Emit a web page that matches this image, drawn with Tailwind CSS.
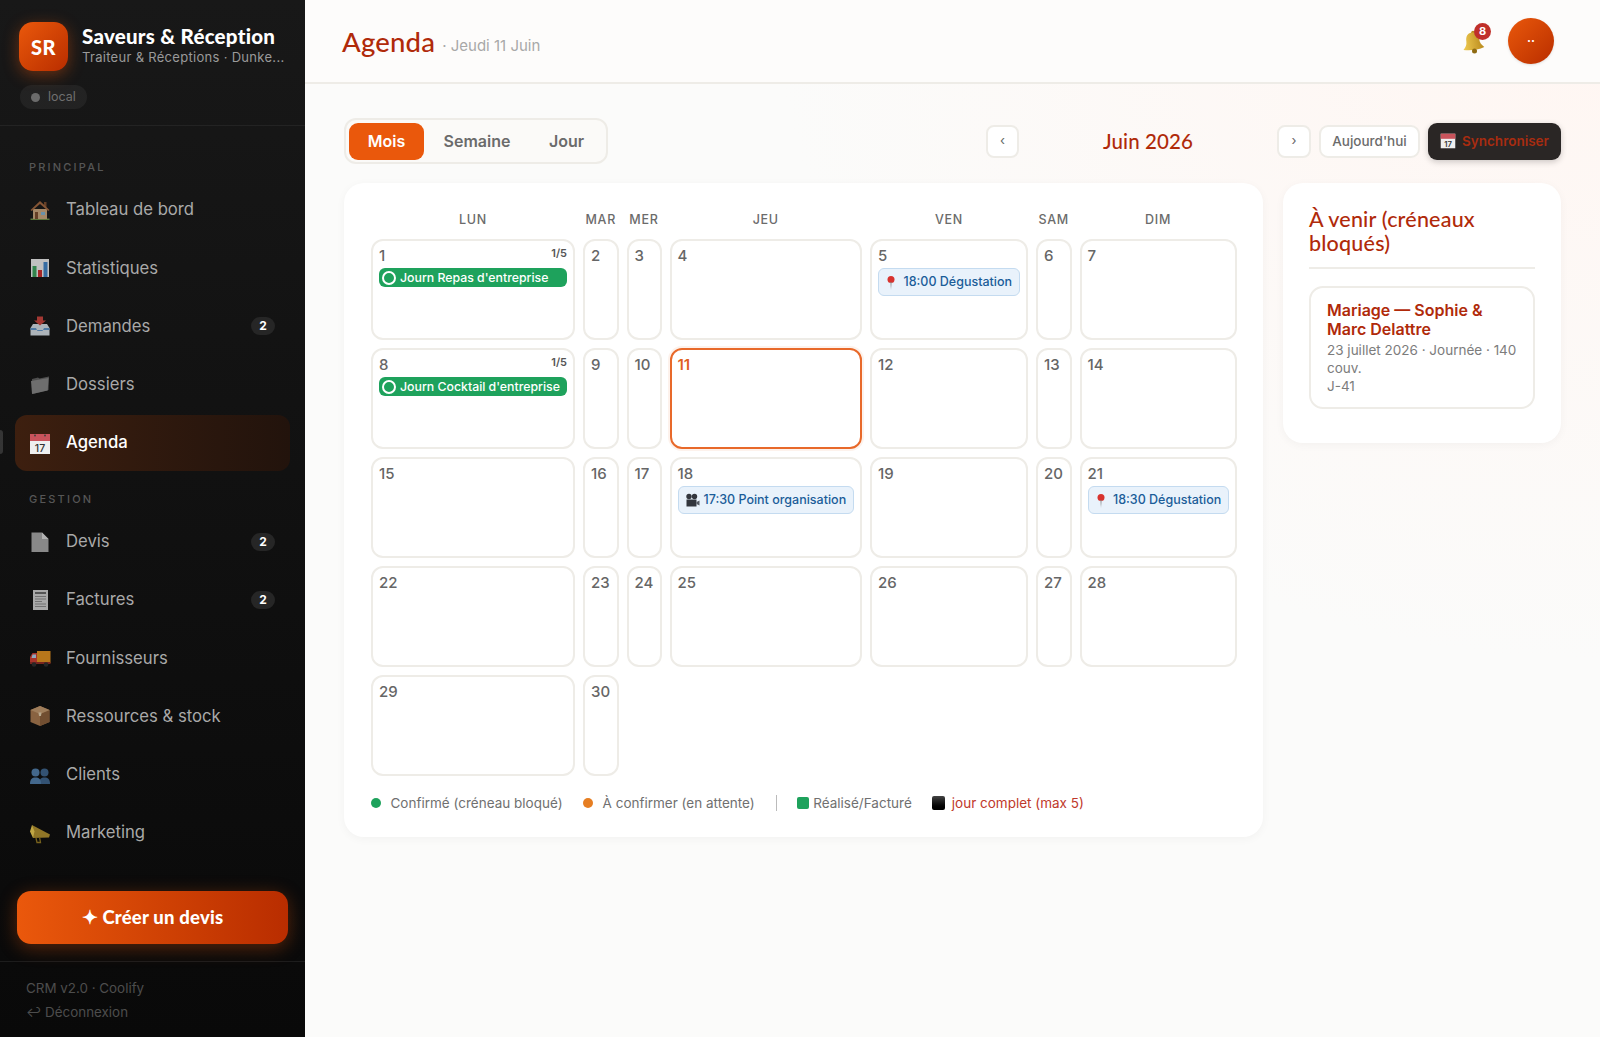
<!DOCTYPE html>
<html lang="fr">
<head>
    <meta charset="UTF-8">
    <meta name="viewport" content="width=device-width, initial-scale=1.0">
    <title>Agenda - Saveurs & Réception</title>
    <script src="https://cdn.jsdelivr.net/npm/@tailwindcss/browser@4"></script>
</head>
<body class="font-['Inter','Liberation_Sans',sans-serif] bg-[#fbfbfa] overflow-hidden">
<div class="flex h-[1037px] w-[1600px]">

    <!-- Sidebar -->
    <aside class="relative w-[305px] shrink-0 flex flex-col bg-gradient-to-b from-[#181818] to-[#090909]">
        <div class="h-[126px] px-[19px] pt-[22px] border-b border-white/[0.06]">
            <div class="flex items-start gap-[14px]">
                <div class="w-[49px] h-[49px] rounded-[14px] bg-gradient-to-br from-[#ea580c] to-[#b92d00] shadow-[0_4px_16px_rgba(234,88,12,0.4)] flex items-center justify-center text-white font-black text-[20px] tracking-[0.5px] font-['Lato',sans-serif]">SR</div>
                <div class="min-w-0 pt-[2px]">
                    <div class="text-white font-black text-[20.500px] tracking-[0.25px] leading-[24px] font-['Lato',sans-serif] whitespace-nowrap">Saveurs &amp; Réception</div>
                    <div class="mt-px text-[#9a9a9a] text-[13px] leading-[17px] tracking-[0.3px] whitespace-nowrap">Traiteur &amp; Réceptions · Dunke...</div>
                </div>
            </div>
            <div class="mt-[14px] ml-px inline-flex items-center gap-[8px] h-[24px] px-[11px] rounded-full bg-white/[0.05] text-[#6f6f6f] text-[12.500px]">
                <span class="w-[9px] h-[9px] rounded-full bg-[#6b6b6b]"></span>local
            </div>
        </div>

        <nav class="flex-1 px-[15px] pt-[34px]">
            <div class="pl-[14px] h-[14px] leading-[14px] text-[11px] font-medium tracking-[0.2em] text-[#565656] mb-[8px]">PRINCIPAL</div>

            <a class="flex items-center h-[56px] mb-[2.200px] pl-[14px] pr-[15px] rounded-[12px] text-[#a9a9a9] text-[16.700px]">
                <svg class="w-[22px] h-[22px] mr-[15px] shrink-0 opacity-80" viewBox="0 0 22 22"><path d="M1.500 19.500h19v1.500h-19z" fill="#6f8f45"/><path d="M4 10h14v10H4z" fill="#c9a57c"/><path d="M15 3h2.500v5H15z" fill="#7a4a2b"/><path d="M11 2 1.500 11l1.300 1L11 5l8.200 7 1.300-1z" fill="#a0643c"/><path d="M6 13h3v7H6z" fill="#7a4a2b"/><path d="M12 13h4v3h-4z" fill="#7fb0cf"/></svg>
                Tableau de bord
            </a>
            <a class="flex items-center h-[56px] mb-[2.200px] pl-[14px] pr-[15px] rounded-[12px] text-[#a9a9a9] text-[16.700px]">
                <svg class="w-[22px] h-[22px] mr-[15px] shrink-0 opacity-80" viewBox="0 0 22 22"><path d="M2 2h18v18H2z" fill="#ececec"/><path d="M3.500 9h4v11h-4z" fill="#3aa05a"/><path d="M9 13h4v7H9z" fill="#c92a2a"/><path d="M14.500 5h4v15h-4z" fill="#3f83c6"/></svg>
                Statistiques
            </a>
            <a class="flex items-center h-[56px] mb-[2.200px] pl-[14px] pr-[15px] rounded-[12px] text-[#a9a9a9] text-[16.700px]">
                <svg class="w-[22px] h-[22px] mr-[15px] shrink-0 opacity-80" viewBox="0 0 22 22"><path d="M1.500 13 4 9h14l2.500 4v7.500h-19z" fill="#d3dbe3"/><path d="M1.500 13h5.500l1.500 3h5l1.500-3h5.500v2H1.500z" fill="#5f93c7"/><path d="M8 1.500h6v4h3l-6 5-6-5h3z" fill="#c7423b"/></svg>
                Demandes
                <span class="ml-auto w-[24px] h-[18px] rounded-full bg-[#262626] flex items-center justify-center text-white text-[12px] font-bold">2</span>
            </a>
            <a class="flex items-center h-[56px] mb-[2.200px] pl-[14px] pr-[15px] rounded-[12px] text-[#a9a9a9] text-[16.700px]">
                <svg class="w-[22px] h-[22px] mr-[15px] shrink-0 opacity-80" viewBox="0 0 22 22"><path d="M3 5 9 3.500l1.500 1L20 2.500 19.500 16 3.500 20z" fill="#5e5e5e"/><path d="M2 7l17.500-3-.8 12.500L3 20z" fill="#858585"/></svg>
                Dossiers
            </a>
            <a class="relative flex items-center h-[56px] mb-[2.200px] pl-[14px] pr-[15px] rounded-[12px] text-white font-medium text-[16.700px] bg-gradient-to-r from-[#3d1f0f] to-[#22130c]">
                <svg class="w-[22px] h-[22px] mr-[15px] shrink-0" viewBox="0 0 22 22"><path d="M1 2h20v20H1z" fill="#efefef"/><path d="M1 2h20v7H1z" fill="#c9535b"/><circle cx="6" cy="3.500" r="1" fill="#444"/><circle cx="16" cy="3.500" r="1" fill="#444"/><text x="11" y="19.500" text-anchor="middle" font-size="10.500" fill="#333" font-family="Inter">17</text></svg>
                Agenda
            </a>

            <div class="pl-[14px] mt-[21px] h-[14px] leading-[14px] text-[11px] font-medium tracking-[0.2em] text-[#565656] mb-[8px]">GESTION</div>

            <a class="flex items-center h-[56px] mb-[2.200px] pl-[14px] pr-[15px] rounded-[12px] text-[#a9a9a9] text-[16.700px]">
                <svg class="w-[22px] h-[22px] mr-[15px] shrink-0 opacity-80" viewBox="0 0 22 22"><path d="M2.500 1.500h10.500l6.500 6.500v13h-17z" fill="#a8a8a8"/><path d="M13 1.500 19.500 8H13z" fill="#dcdcdc"/></svg>
                Devis
                <span class="ml-auto w-[24px] h-[18px] rounded-full bg-[#262626] flex items-center justify-center text-white text-[12px] font-bold">2</span>
            </a>
            <a class="flex items-center h-[56px] mb-[2.200px] pl-[14px] pr-[15px] rounded-[12px] text-[#a9a9a9] text-[16.700px]">
                <svg class="w-[22px] h-[22px] mr-[15px] shrink-0 opacity-80" viewBox="0 0 22 22"><path d="M4 1h15v20H4z" fill="#cfcfcf"/><path d="M6 3h11v2H6z" fill="#666"/><path d="M6 7h11v1H6zM6 9.500h11v1H6zM6 12h7v1H6zM6 14.500h11v1H6zM6 17h11v1H6z" fill="#8a8a8a"/></svg>
                Factures
                <span class="ml-auto w-[24px] h-[18px] rounded-full bg-[#262626] flex items-center justify-center text-white text-[12px] font-bold">2</span>
            </a>
            <a class="flex items-center h-[56px] mb-[2.200px] pl-[14px] pr-[15px] rounded-[12px] text-[#a9a9a9] text-[16.700px]">
                <svg class="w-[22px] h-[22px] mr-[15px] shrink-0 opacity-85" viewBox="0 0 22 22"><path d="M8 4h13.500v12H8z" fill="#d68a1e"/><path d="M1 10l2.500-4H8v11H1z" fill="#c23a30"/><path d="M3.500 7.500H7V11H2.500z" fill="#a8c4dc"/><path d="M1 15h20.500v2H1z" fill="#8b2a22"/><circle cx="5" cy="17.500" r="2.300" fill="#2b2b2b"/><circle cx="17" cy="17.500" r="2.300" fill="#2b2b2b"/></svg>
                Fournisseurs
            </a>
            <a class="flex items-center h-[56px] mb-[2.200px] pl-[14px] pr-[15px] rounded-[12px] text-[#a9a9a9] text-[16.700px]">
                <svg class="w-[22px] h-[22px] mr-[15px] shrink-0 opacity-80" viewBox="0 0 22 22"><path d="M11 1 20.500 5v12L11 21 1.500 17V5z" fill="#a8794e"/><path d="M11 9v12l9.500-4V5z" fill="#8a5f3a"/><path d="M11 1 20.500 5 11 9 1.500 5z" fill="#c49a6f"/><path d="M9.500 7.500 10 11h2l.500-3.500z" fill="#e3cfae"/></svg>
                Ressources &amp; stock
            </a>
            <a class="flex items-center h-[56px] mb-[2.200px] pl-[14px] pr-[15px] rounded-[12px] text-[#a9a9a9] text-[16.700px]">
                <svg class="w-[22px] h-[22px] mr-[15px] shrink-0 opacity-85" viewBox="0 0 22 22"><circle cx="15.500" cy="8.500" r="4" fill="#3a5f85"/><path d="M10 20c0-5 2-6.500 5.500-6.500S21 15 21 20z" fill="#3a5f85"/><circle cx="6.500" cy="8.500" r="4" fill="#4d78a3"/><path d="M1 20c0-5 2-6.500 5.500-6.500S12 15 12 20z" fill="#4d78a3"/></svg>
                Clients
            </a>
            <a class="flex items-center h-[56px] mb-[2.200px] pl-[14px] pr-[15px] rounded-[12px] text-[#a9a9a9] text-[16.700px]">
                <svg class="w-[22px] h-[22px] mr-[15px] shrink-0 opacity-85" viewBox="0 0 22 22"><path d="M3 3 21 12.500 20 15.500 4 16z" fill="#a8892c"/><path d="M3 3 1 9.500 4 16 5.500 9.500z" fill="#e0c24e"/><path d="M7 16 8 20.500h3.500l-.800-4.500" fill="none" stroke="#8b7220" stroke-width="1.300"/></svg>
                Marketing
            </a>
        </nav>

        <div class="px-[17px] pb-[17px] border-b border-white/[0.08]">
            <button class="w-[271px] h-[53px] rounded-[14px] bg-gradient-to-r from-[#ea580c] to-[#b92d00] text-white font-black text-[18.500px] tracking-[0.2px] pt-px font-['Lato',sans-serif] shadow-[0_4px_18px_rgba(234,88,12,0.35)]">✦ Créer un devis</button>
        </div>
        <div class="h-[75px] pl-[26px] pt-[15px] text-[13.400px] leading-[23.500px] text-[#4d4d4d]">
            <div>CRM v2.0 · Coolify</div>
            <div>↩ Déconnexion</div>
        </div>

        <span class="absolute left-0 top-[430px] w-[3px] h-[24px] rounded-r bg-white/15"></span>
    </aside>

    <!-- Main -->
    <main class="flex-1 min-w-0 flex flex-col bg-[radial-gradient(ellipse_at_top_right,#fff6f2,#fbfbfa_45%)]">
        <header class="h-[84px] shrink-0 flex items-center pl-[37px] pr-[46px] border-b-2 border-[#eeece7] bg-[#fdfcfb]">
            <h1 class="mt-[2px] text-[27.500px] tracking-[0.2px] font-medium text-[#b02a0a] font-['Lato',sans-serif]">Agenda</h1>
            <span class="ml-[7px] mt-[10px] text-[15px] text-[#a8a8a8]">· Jeudi 11 Juin</span>
            <div class="relative ml-auto mr-[23px] mt-[2px] w-[24px] h-[24px]">
                <svg class="w-[24px] h-[24px]" viewBox="0 0 24 24">
                    <defs><linearGradient id="bell" x1="0" y1="0" x2="1" y2="0"><stop offset="0" stop-color="#f0cb52"/><stop offset="1" stop-color="#b98a1c"/></linearGradient></defs>
                    <circle cx="12" cy="2.500" r="1.800" fill="#b98a1c"/>
                    <path d="M12 2.500c-4.500 0-6.500 3.500-6.500 8 0 3.500-1.500 5.500-4 8 6 2 15 2 21 0-2.500-2.500-4-4.500-4-8 0-4.500-2-8-6.500-8z" fill="url(#bell)" transform="rotate(-8 12 12)"/>
                    <circle cx="13.500" cy="21" r="2.500" fill="#8f6b12"/>
                </svg>
                <span class="absolute -top-[7px] left-[13px] w-[17px] h-[17px] rounded-full bg-[#c0302a] text-white text-[11px] font-bold flex items-center justify-center">8</span>
            </div>
            <div class="w-[46px] h-[46px] rounded-full bg-gradient-to-br from-[#ea580c] to-[#b92d00] text-white text-[12px] font-bold flex items-center justify-center shadow-sm">··</div>
        </header>

        <div class="px-[39px] pt-[34px]">
            <!-- Toolbar -->
            <div class="flex items-center h-[46px]">
                <div class="flex items-center h-[46px] p-[3px] rounded-[12px] border-2 border-[#eeece7] bg-[#fbfaf8]">
                    <button class="w-[75px] h-[37px] rounded-[9px] bg-[#ea580c] text-white font-semibold text-[16px]">Mois</button>
                    <button class="w-[106px] h-[37px] text-[#6b6b6b] font-semibold text-[16px]">Semaine</button>
                    <button class="w-[73px] h-[37px] text-[#6b6b6b] font-semibold text-[16px]">Jour</button>
                </div>
                <div class="ml-auto flex items-center">
                    <button class="w-[33px] h-[33px] rounded-[8px] bg-white border-2 border-[#eeece7] text-[#666] text-[13px]">‹</button>
                    <div class="w-[258px] text-center text-[20.500px] tracking-[0.1px] font-medium text-[#b02a0a] font-['Lato',sans-serif]">Juin 2026</div>
                    <button class="w-[34px] h-[33px] rounded-[8px] bg-white border-2 border-[#eeece7] text-[#666] text-[13px]">›</button>
                    <button class="ml-[8px] w-[101px] h-[33px] rounded-[9px] bg-white border-2 border-[#eeece7] text-[#6b6b6b] text-[13.500px] font-medium">Aujourd'hui</button>
                    <button class="ml-[8px] w-[133px] h-[37px] rounded-[9px] bg-[#2a2625] shadow-[0_2px_6px_rgba(0,0,0,0.2)] flex items-center justify-center gap-[6px] text-[#a82c10] text-[13.500px] font-semibold">
                        <svg class="w-[16px] h-[16px]" viewBox="0 0 22 22"><path d="M1 1h20v20H1z" fill="#efefef"/><path d="M1 1h20v7H1z" fill="#c9535b"/><text x="11" y="19" text-anchor="middle" font-size="10.500" fill="#333" font-family="Inter">17</text></svg>
                        Synchroniser
                    </button>
                </div>
            </div>

            <div class="flex items-start gap-[20px] mt-[19px]">
                <!-- Calendar card -->
                <section class="w-[919px] h-[654px] shrink-0 rounded-[20px] bg-white shadow-[0_2px_10px_rgba(0,0,0,0.04)] pl-[27px] pr-[26px] pt-[28px]">
                    <div class="grid grid-cols-[204px_35.500px_35px_192.500px_158px_35.500px_157px] gap-x-[8px] h-[17px] mb-[11px] text-center text-[12.500px] leading-[17px] font-medium tracking-[0.06em] text-[#6b6b6b]">
                        <div>LUN</div><div>MAR</div><div>MER</div><div>JEU</div><div>VEN</div><div>SAM</div><div>DIM</div>
                    </div>
                    <div class="grid grid-cols-[204px_35.500px_35px_192.500px_158px_35.500px_157px] auto-rows-[101px] gap-x-[8px] gap-y-[8px] text-[15px] font-medium text-[#666]">
                        <div class="relative rounded-[12px] border-2 border-[#eeece7] px-[6px] pt-[5px]">
                            <div class="leading-[20px]">1</div>
                            <span class="absolute right-[6px] top-[4px] text-[11px] font-semibold text-[#555]">1/5</span>
                            <div class="mt-[2px] h-[19px] rounded-[6px] bg-[#1ea25c] flex items-center gap-[4px] text-white text-[12.300px] font-medium">
                                <span class="ml-[3px] w-[14px] h-[14px] rounded-full border-2 border-white"></span><span class="pt-px">Journ Repas d'entreprise</span>
                            </div>
                        </div>
                        <div class="rounded-[12px] border-2 border-[#eeece7] px-[6px] pt-[5px] leading-[20px]">2</div>
                        <div class="rounded-[12px] border-2 border-[#eeece7] px-[6px] pt-[5px] leading-[20px]">3</div>
                        <div class="rounded-[12px] border-2 border-[#eeece7] px-[6px] pt-[5px] leading-[20px]">4</div>
                        <div class="rounded-[12px] border-2 border-[#eeece7] px-[6px] pt-[5px]">
                            <div class="leading-[20px]">5</div>
                            <div class="mt-[2px] h-[28px] rounded-[6px] border border-[#c4dbf0] bg-[#e9f2fb] flex items-center pl-[6px] pt-px text-[#1b5d99] text-[12.500px] font-medium whitespace-nowrap">
                                <svg class="w-[12px] h-[16px] mr-[6.500px] shrink-0" viewBox="0 0 12 16"><circle cx="6" cy="4.500" r="3.500" fill="#d8332e"/><path d="M5.400 7h1.200L6 15z" fill="#888"/></svg>18:00 Dégustation
                            </div>
                        </div>
                        <div class="rounded-[12px] border-2 border-[#eeece7] px-[6px] pt-[5px] leading-[20px]">6</div>
                        <div class="rounded-[12px] border-2 border-[#eeece7] px-[6px] pt-[5px] leading-[20px]">7</div>

                        <div class="relative rounded-[12px] border-2 border-[#eeece7] px-[6px] pt-[5px]">
                            <div class="leading-[20px]">8</div>
                            <span class="absolute right-[6px] top-[4px] text-[11px] font-semibold text-[#555]">1/5</span>
                            <div class="mt-[2px] h-[19px] rounded-[6px] bg-[#1ea25c] flex items-center gap-[4px] text-white text-[12.300px] font-medium whitespace-nowrap">
                                <span class="ml-[3px] w-[14px] h-[14px] rounded-full border-2 border-white"></span><span class="pt-px">Journ Cocktail d'entreprise</span>
                            </div>
                        </div>
                        <div class="rounded-[12px] border-2 border-[#eeece7] px-[6px] pt-[5px] leading-[20px]">9</div>
                        <div class="rounded-[12px] border-2 border-[#eeece7] px-[6px] pt-[5px] leading-[20px]">10</div>
                        <div class="rounded-[12px] border-2 border-[#e8692a] shadow-[0_0_0_2px_rgba(234,88,12,0.08)] px-[6px] pt-[5px] leading-[20px] text-[#e0601f] font-semibold">11</div>
                        <div class="rounded-[12px] border-2 border-[#eeece7] px-[6px] pt-[5px] leading-[20px]">12</div>
                        <div class="rounded-[12px] border-2 border-[#eeece7] px-[6px] pt-[5px] leading-[20px]">13</div>
                        <div class="rounded-[12px] border-2 border-[#eeece7] px-[6px] pt-[5px] leading-[20px]">14</div>

                        <div class="rounded-[12px] border-2 border-[#eeece7] px-[6px] pt-[5px] leading-[20px]">15</div>
                        <div class="rounded-[12px] border-2 border-[#eeece7] px-[6px] pt-[5px] leading-[20px]">16</div>
                        <div class="rounded-[12px] border-2 border-[#eeece7] px-[6px] pt-[5px] leading-[20px]">17</div>
                        <div class="rounded-[12px] border-2 border-[#eeece7] px-[6px] pt-[5px]">
                            <div class="leading-[20px]">18</div>
                            <div class="mt-[2px] h-[28px] rounded-[6px] border border-[#c4dbf0] bg-[#e9f2fb] flex items-center pl-[6px] pt-px text-[#1b5d99] text-[12.500px] font-medium whitespace-nowrap">
                                <svg class="w-[15px] h-[15px] mr-[4px] shrink-0" viewBox="0 0 15 15"><circle cx="4" cy="3.500" r="2.700" fill="#33363d"/><circle cx="9.500" cy="3.500" r="2.700" fill="#33363d"/><path d="M1.500 6.500h10v7h-10z" fill="#33363d"/><path d="M11.500 9l3-1.500v5l-3-1.500z" fill="#555a63"/></svg>17:30 Point organisation
                            </div>
                        </div>
                        <div class="rounded-[12px] border-2 border-[#eeece7] px-[6px] pt-[5px] leading-[20px]">19</div>
                        <div class="rounded-[12px] border-2 border-[#eeece7] px-[6px] pt-[5px] leading-[20px]">20</div>
                        <div class="rounded-[12px] border-2 border-[#eeece7] px-[6px] pt-[5px]">
                            <div class="leading-[20px]">21</div>
                            <div class="mt-[2px] h-[28px] rounded-[6px] border border-[#c4dbf0] bg-[#e9f2fb] flex items-center pl-[6px] pt-px text-[#1b5d99] text-[12.500px] font-medium whitespace-nowrap">
                                <svg class="w-[12px] h-[16px] mr-[6.500px] shrink-0" viewBox="0 0 12 16"><circle cx="6" cy="4.500" r="3.500" fill="#d8332e"/><path d="M5.400 7h1.200L6 15z" fill="#888"/></svg>18:30 Dégustation
                            </div>
                        </div>

                        <div class="rounded-[12px] border-2 border-[#eeece7] px-[6px] pt-[5px] leading-[20px]">22</div>
                        <div class="rounded-[12px] border-2 border-[#eeece7] px-[6px] pt-[5px] leading-[20px]">23</div>
                        <div class="rounded-[12px] border-2 border-[#eeece7] px-[6px] pt-[5px] leading-[20px]">24</div>
                        <div class="rounded-[12px] border-2 border-[#eeece7] px-[6px] pt-[5px] leading-[20px]">25</div>
                        <div class="rounded-[12px] border-2 border-[#eeece7] px-[6px] pt-[5px] leading-[20px]">26</div>
                        <div class="rounded-[12px] border-2 border-[#eeece7] px-[6px] pt-[5px] leading-[20px]">27</div>
                        <div class="rounded-[12px] border-2 border-[#eeece7] px-[6px] pt-[5px] leading-[20px]">28</div>

                        <div class="rounded-[12px] border-2 border-[#eeece7] px-[6px] pt-[5px] leading-[20px]">29</div>
                        <div class="rounded-[12px] border-2 border-[#eeece7] px-[6px] pt-[5px] leading-[20px]">30</div>
                    </div>

                    <!-- Legend -->
                    <div class="flex items-center h-[18px] mt-[18px] text-[13.500px] text-[#707070] whitespace-nowrap">
                        <span class="w-[10px] h-[10px] rounded-full bg-[#1ea25c] mr-[9.500px]"></span>Confirmé (créneau bloqué)
                        <span class="w-[10px] h-[10px] rounded-full bg-[#e67e22] ml-[20px] mr-[10px]"></span>À confirmer (en attente)
                        <span class="w-px h-[16px] bg-[#bbb] ml-[21.500px] mr-[20px]"></span>
                        <span class="w-[12px] h-[12px] rounded-[2px] bg-[#1ea25c] mr-[4px]"></span>Réalisé/Facturé
                        <span class="w-[13px] h-[14px] rounded-[2px] bg-gradient-to-b from-[#444] to-black ml-[20px] mr-[7px]"></span><span class="text-[#c0392b]">jour complet (max 5)</span>
                    </div>
                </section>

                <!-- Upcoming -->
                <section class="w-[278px] h-[260px] rounded-[20px] bg-white shadow-[0_2px_10px_rgba(0,0,0,0.04)] px-[26px] pt-[24px]">
                    <h2 class="pb-[12px] border-b-2 border-[#eeece7] text-[21.500px] tracking-[0.2px] leading-[24px] font-medium text-[#b02a0a] font-['Lato',sans-serif]">À venir (créneaux bloqués)</h2>
                    <div class="mt-[17px] h-[123px] rounded-[14px] border-2 border-[#eeece7] pl-[16px] pr-[12px] pt-[13px]">
                        <div class="text-[16px] leading-[19px] font-semibold text-[#b02a0a]">Mariage — Sophie &amp; Marc Delattre</div>
                        <div class="mt-[2px] text-[13.500px] leading-[18px] text-[#7c7c7c]">23 juillet 2026 · Journée · 140 couv.</div>
                        <div class="text-[13.500px] leading-[18px] text-[#7c7c7c]">J-41</div>
                    </div>
                </section>
            </div>
        </div>
    </main>
</div>
</body>
</html>
